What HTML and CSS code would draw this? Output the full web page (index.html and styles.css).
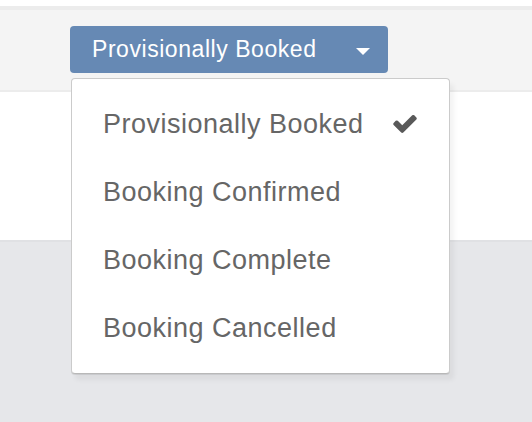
FILE: index.html
```html
<!DOCTYPE html>
<html>
<head>
<meta charset="utf-8">
<link rel="stylesheet" href="styles.css">
</head>
<body>
<div class="top-strip"></div>
<div class="toolbar">
  <div class="dropdown">
    <button class="status-btn">
      <span>Provisionally Booked</span>
      <span class="caret"></span>
    </button>
    <ul class="menu">
      <li class="item active"><span>Provisionally Booked</span>
        <svg class="check" viewBox="121 338 1550 1184" width="24" height="18"><path fill="currentColor" d="M1671 566q0 40-28 68l-724 724-136 136q-28 28-68 28t-68-28l-136-136-362-362q-28-28-28-68t28-68l136-136q28-28 68-28t68 28l294 295 656-657q28-28 68-28t68 28l136 136q28 28 28 68z"/></svg>
      </li>
      <li class="item"><span>Booking Confirmed</span></li>
      <li class="item"><span>Booking Complete</span></li>
      <li class="item"><span>Booking Cancelled</span></li>
    </ul>
  </div>
</div>
<div class="panel"></div>
<div class="footer"></div>
</body>
</html>
```
FILE: styles.css
```css
html, body {
  margin: 0;
  padding: 0;
}
body {
  background: #e6e7ea;
  font-family: "Liberation Sans", Arial, sans-serif;
  height: 422px;
  overflow: hidden;
}
.top-strip {
  height: 6px;
  background: #ffffff;
}
.toolbar {
  height: 80px;
  background: #f4f4f4;
  border-top: 4px solid #ececec;
  border-bottom: 2px solid #ececec;
  padding-left: 70px;
  box-sizing: content-box;
}
.dropdown {
  position: relative;
  padding-top: 16px;
  width: 318px;
}
.status-btn {
  display: flex;
  align-items: center;
  justify-content: space-between;
  width: 318px;
  height: 47px;
  padding: 0 18px 0 22px;
  box-sizing: border-box;
  background: #6689b4;
  color: #ffffff;
  border: none;
  border-radius: 4px;
  font-family: "Liberation Sans", Arial, sans-serif;
  font-size: 23px;
  letter-spacing: 0.55px;
}
.caret {
  width: 0;
  height: 0;
  border-left: 7px solid transparent;
  border-right: 7px solid transparent;
  border-top: 7px solid #ffffff;
  margin-top: 3px;
}
.menu {
  position: absolute;
  top: 68px;
  left: 1px;
  width: 379px;
  margin: 0;
  padding: 11px 0;
  box-sizing: border-box;
  list-style: none;
  background: #ffffff;
  border: 1px solid #cbcbcb;
  border-bottom-color: #b8b8b8;
  border-radius: 4px;
  box-shadow: 0 1px 0 rgba(0,0,0,0.08), 4px 6px 5px rgba(0,0,0,0.05);
  z-index: 5;
}
.item {
  display: flex;
  align-items: center;
  justify-content: space-between;
  height: 68px;
  line-height: 68px;
  padding: 0 32px 0 31px;
  font-size: 27px;
  color: #666666;
  letter-spacing: 0.5px;
}
.check {
  color: #595959;
  margin-top: -1px;
}
.panel {
  height: 148px;
  background: #ffffff;
  border-bottom: 2px solid #e0e1e4;
}
.footer {
  height: 180px;
  background: #e6e7ea;
}
```
